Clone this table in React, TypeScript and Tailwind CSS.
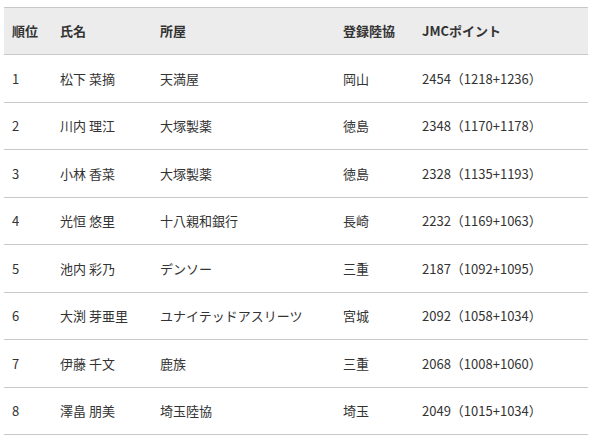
const rows = [
  { rank: 1, name: '松下 菜摘', team: '天満屋', assoc: '岡山', points: '2454（1218+1236）' },
  { rank: 2, name: '川内 理江', team: '大塚製薬', assoc: '徳島', points: '2348（1170+1178）' },
  { rank: 3, name: '小林 香菜', team: '大塚製薬', assoc: '徳島', points: '2328（1135+1193）' },
  { rank: 4, name: '光恒 悠里', team: '十八親和銀行', assoc: '長崎', points: '2232（1169+1063）' },
  { rank: 5, name: '池内 彩乃', team: 'デンソー', assoc: '三重', points: '2187（1092+1095）' },
  { rank: 6, name: '大渕 芽亜里', team: 'ユナイテッドアスリーツ', assoc: '宮城', points: '2092（1058+1034）' },
  { rank: 7, name: '伊藤 千文', team: '鹿族', assoc: '三重', points: '2068（1008+1060）' },
  { rank: 8, name: '澤畠 朋美', team: '埼玉陸協', assoc: '埼玉', points: '2049（1015+1034）' },
]

const cols = 'grid grid-cols-[48px_100px_183px_79px_1fr] items-center pl-2'

export default function App() {
  return (
    <div className="h-[443px] w-[602px] bg-white pl-1 pt-[7px] font-['Noto_Sans_CJK_JP','Noto_Sans',sans-serif] text-[13px] text-[#333]">
      <div className="w-[584px]">
        <div className={`${cols} h-[48px] border-y border-[#c8c8c8] bg-[#ececec] font-bold`}>
          <span>順位</span>
          <span>氏名</span>
          <span>所屋</span>
          <span>登録陸協</span>
          <span>JMCポイント</span>
        </div>
        {rows.map((r) => (
          <div key={r.rank} className={`${cols} h-[47.5px] border-b border-[#c8c8c8]`}>
            <span>{r.rank}</span>
            <span>{r.name}</span>
            <span>{r.team}</span>
            <span>{r.assoc}</span>
            <span>{r.points}</span>
          </div>
        ))}
      </div>
    </div>
  )
}
